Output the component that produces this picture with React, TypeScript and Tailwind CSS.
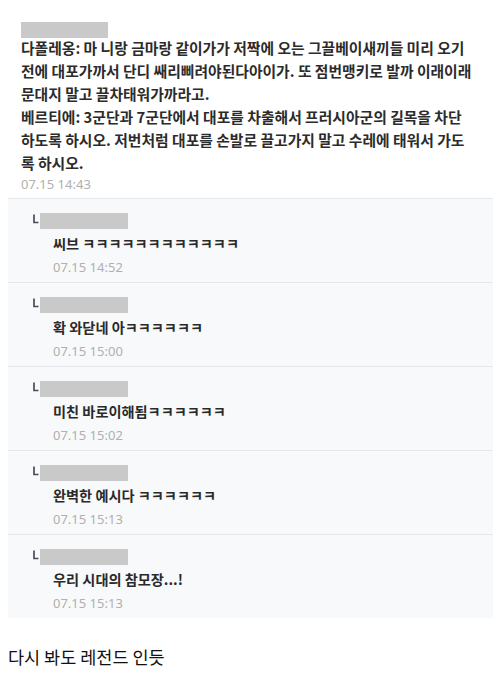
const KR = "font-['Noto_Sans_CJK_KR','Noto_Sans',sans-serif]";

const MAIN_LINES = [
  "다폴레옹: 마 니랑 금마랑 같이가가 저짝에 오는 그끌베이새끼들 미리 오기",
  "전에 대포가까서 단디 쌔리삐려야된다아이가. 또 점번맹키로 발까 이래이래",
  "문대지 말고 끌차태워가까라고.",
  "베르티에: 3군단과 7군단에서 대포를 차출해서 프러시아군의 길목을 차단",
  "하도록 하시오. 저번처럼 대포를 손발로 끌고가지 말고 수레에 태워서 가도",
  "록 하시오.",
];

const REPLIES = [
  { text: "씨브 ㅋㅋㅋㅋㅋㅋㅋㅋㅋㅋㅋㅋ", date: "07.15 14:52" },
  { text: "확 와닫네 아ㅋㅋㅋㅋㅋㅋ", date: "07.15 15:00" },
  { text: "미친 바로이해됨ㅋㅋㅋㅋㅋㅋ", date: "07.15 15:02" },
  { text: "완벽한 예시다 ㅋㅋㅋㅋㅋㅋ", date: "07.15 15:13" },
  { text: "우리 시대의 참모장...!", date: "07.15 15:13" },
];

function ReplyMark() {
  return (
    <svg width="6" height="10" viewBox="0 0 6 10" className="shrink-0 mt-[1px]">
      <path d="M1 0.5 V8.5 H5.5" fill="none" stroke="#4b4b5a" strokeWidth="1.7" />
    </svg>
  );
}

function Reply({ text, date }: { text: string; date: string }) {
  return (
    <div className="h-[84px] border-t border-[#e6e7ea] pl-[25px] pt-[14px]">
      <div className="flex items-start gap-[1px]">
        <ReplyMark />
        <div className="h-4 w-[88px] bg-[#c9c9c9]" />
      </div>
      <div className="pl-[20px]">
        <div className="mt-[3px] text-[14.2px] font-bold leading-[22px] text-[#2a2a2a] whitespace-nowrap">{text}</div>
        <div className="mt-[3px] font-['Noto_Sans',sans-serif] text-[13px] leading-[20px] text-[#b0b0b0]">{date}</div>
      </div>
    </div>
  );
}

export default function App() {
  return (
    <div className={`${KR} w-[501px] h-[678px] bg-white overflow-hidden`}>
      <div className="mx-[8px] pt-[22px]">
        <div className="pl-[13px]">
          <div className="h-4 w-[87px] bg-[#c9c9c9]" />
          <div className="-mt-[2px] text-[14.8px] font-semibold leading-[23px] text-[#2b2b2b]">
            {MAIN_LINES.map((l) => (
              <div key={l} className="whitespace-nowrap">{l}</div>
            ))}
          </div>
          <div className="font-['Noto_Sans',sans-serif] text-[13px] leading-[20px] text-[#b0b0b0] pb-[4px]">07.15 14:43</div>
        </div>
        <div className="bg-[#f8f9fa]">
          {REPLIES.map((r, i) => (
            <Reply key={i} text={r.text} date={r.date} />
          ))}
        </div>
      </div>
      <div className="mt-[27px] pl-[8px] text-[17.5px] leading-[24px] text-[#111]">다시 봐도 레전드 인듯</div>
    </div>
  );
}
